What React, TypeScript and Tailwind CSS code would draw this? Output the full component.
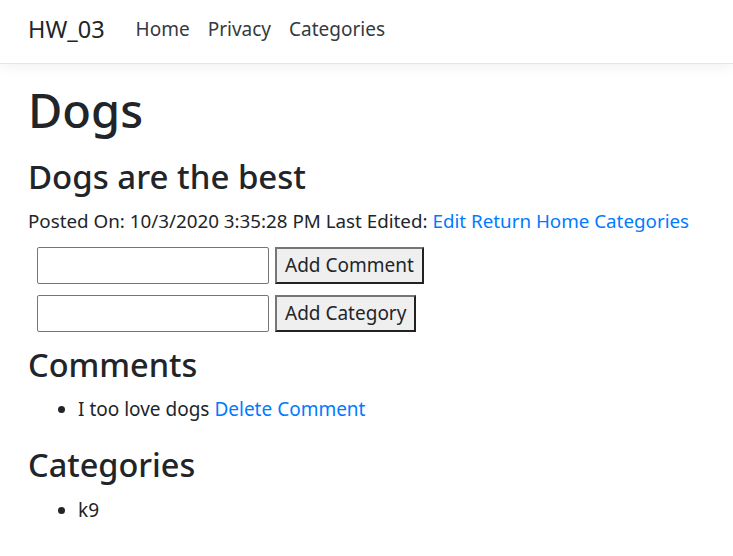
import React from 'react';

const App: React.FC = () => {
  return (
    <div className="min-h-[556px] bg-white text-[#212529] font-['Noto_Sans',sans-serif] text-[19px]">
      {/* Navbar */}
      <nav className="h-[64px] flex items-center px-[28px] pb-[4px] border-b border-[#e5e5e5] shadow-[0_4px_12px_rgba(0,0,0,0.05)]">
        <span className="text-[23.5px] text-[#212529] mr-[31px]">HW_03</span>
        <div className="flex gap-[18px] text-[19px] text-[#343a40]">
          <a href="#">Home</a>
          <a href="#">Privacy</a>
          <a href="#">Categories</a>
        </div>
      </nav>

      {/* Content */}
      <main className="px-[28px] pt-[18px]">
        <h1 className="text-[47px] font-medium leading-[56px]">Dogs</h1>
        <h2 className="text-[33px] font-medium leading-[44px] mt-[17px]">Dogs are the best</h2>
        <p className="mt-[8px] leading-[28px] text-[18.8px]">
          Posted On: 10/3/2020 3:35:28 PM Last Edited:{' '}
          <a href="#" className="text-[#007bff]">Edit</a>{' '}
          <a href="#" className="text-[#007bff]">Return Home</a>{' '}
          <a href="#" className="text-[#007bff]">Categories</a>
        </p>

        <div className="flex flex-col gap-[11px] mt-[12px] pl-[9px]">
          <form className="flex items-center gap-[6px]">
            <input type="text" className="w-[232px] h-[37px] border border-[#767676] rounded-[2px] px-2" />
            <button type="button" className="h-[37px] px-[8px] bg-[#efefef] border-2 border-t-[#767676] border-l-[#767676] border-r-[#222] border-b-[#222] leading-none">
              Add Comment
            </button>
          </form>
          <form className="flex items-center gap-[6px]">
            <input type="text" className="w-[232px] h-[37px] border border-[#767676] rounded-[2px] px-2" />
            <button type="button" className="h-[37px] px-[8px] bg-[#efefef] border-2 border-t-[#767676] border-l-[#767676] border-r-[#222] border-b-[#222] leading-none">
              Add Category
            </button>
          </form>
        </div>

        <h3 className="text-[32.5px] font-medium leading-[38px] mt-[14px]">Comments</h3>
        <ul className="list-disc pl-[50px] mt-[11px] leading-[28px]">
          <li>
            I too love dogs <a href="#" className="text-[#007bff]">Delete Comment</a>
          </li>
        </ul>

        <h3 className="text-[32.5px] font-medium leading-[38px] mt-[23px]">Categories</h3>
        <ul className="list-disc pl-[50px] mt-[12px] leading-[28px]">
          <li>k9</li>
        </ul>
      </main>
    </div>
  );
};

export default App;
